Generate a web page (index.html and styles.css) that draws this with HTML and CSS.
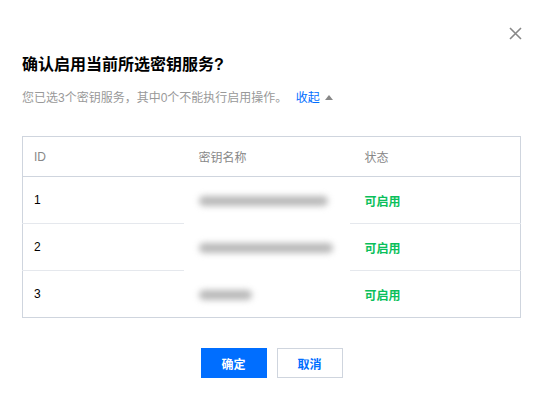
FILE: index.html
```html
<!DOCTYPE html>
<html lang="zh-CN">
<head>
  <meta charset="UTF-8" />
  <meta name="viewport" content="width=device-width, initial-scale=1.0" />
  <title>确认启用</title>
  <link rel="stylesheet" href="styles.css">
</head>
<body>
  <div class="dialog">
    <button class="close" aria-label="关闭">
      <svg width="13" height="13" viewBox="0 0 13 13"><path d="M1 1 L12 12 M12 1 L1 12" stroke="#888" stroke-width="1.6" fill="none"/></svg>
    </button>

    <h2 class="title">确认启用当前所选密钥服务?</h2>
    <p class="summary">
      您已选3个密钥服务，其中0个不能执行启用操作。
      <a href="#" class="toggle">收起<span class="caret"></span></a>
    </p>

    <table class="key-table">
      <thead>
        <tr>
          <th class="col-id">ID</th>
          <th class="col-name">密钥名称</th>
          <th class="col-state">状态</th>
        </tr>
      </thead>
      <tbody>
        <tr>
          <td>1</td>
          <td class="masked"><span class="blur" style="width:129px"></span></td>
          <td class="ok">可启用</td>
        </tr>
        <tr>
          <td>2</td>
          <td class="masked"><span class="blur" style="width:134px"></span></td>
          <td class="ok">可启用</td>
        </tr>
        <tr>
          <td>3</td>
          <td class="name-last"><span class="blur" style="width:53px"></span></td>
          <td class="ok">可启用</td>
        </tr>
      </tbody>
    </table>

    <div class="footer">
      <button class="btn btn-primary">确定</button>
      <button class="btn btn-weak">取消</button>
    </div>
  </div>
</body>
</html>
```

FILE: styles.css
```css
* {
  box-sizing: border-box;
}

body {
  margin: 0;
  background: #fff;
  font-family: "Liberation Sans", "Noto Sans CJK SC", sans-serif;
  font-size: 12px;
  color: #000;
}

.dialog {
  position: relative;
  width: 539px;
  height: 398px;
  padding: 55px 18px 0 22px;
}

.close {
  position: absolute;
  top: 27px;
  right: 17px;
  width: 13px;
  height: 13px;
  padding: 0;
  border: none;
  background: none;
  cursor: pointer;
}

.close svg {
  display: block;
}

.title {
  margin: 0;
  font-size: 16px;
  line-height: 20px;
  font-weight: bold;
  color: #000;
}

.summary {
  margin: 13px 0 0;
  line-height: 20px;
  color: #999;
}

.toggle {
  margin-left: 5px;
  color: #006eff;
  text-decoration: none;
}

.caret {
  display: inline-block;
  margin-left: 5px;
  vertical-align: 2px;
  border-left: 4px solid transparent;
  border-right: 4px solid transparent;
  border-bottom: 5px solid #888;
}

.key-table {
  width: 100%;
  margin-top: 28px;
  border-collapse: collapse;
  border: 1px solid #cfd5de;
  table-layout: fixed;
}

.key-table th,
.key-table td {
  text-align: left;
  padding: 0 0 0 11px;
}

.key-table th {
  height: 40px;
  font-weight: normal;
  color: #888;
  border-bottom: 1px solid #cfd5de;
}

.key-table td {
  height: 47px;
  color: #000;
  border-bottom: 1px solid #e5e8ed;
}

.key-table tbody tr:last-child td {
  border-bottom: none;
}

.col-id {
  width: 161px;
}

.col-name {
  width: 166px;
}

.key-table .col-name,
.key-table .col-state,
.key-table td:nth-child(2),
.key-table td:nth-child(3) {
  padding-left: 15px;
}

.key-table td.masked {
  border-bottom-color: #fff;
}

.blur {
  display: inline-block;
  height: 10px;
  vertical-align: middle;
  border-radius: 5px;
  background: #b9b9b9;
  filter: blur(3px);
}

.key-table td.ok {
  color: #0abf5b;
  font-weight: bold;
}

.footer {
  display: flex;
  justify-content: center;
  gap: 10px;
  margin-top: 30px;
}

.btn {
  width: 66px;
  height: 30px;
  padding: 0;
  font-family: inherit;
  font-size: 12px;
  font-weight: bold;
  cursor: pointer;
}

.btn-primary {
  background: #006eff;
  border: 1px solid #006eff;
  color: #fff;
}

.btn-weak {
  background: #fff;
  border: 1px solid #cfd5de;
  color: #006eff;
}
```
